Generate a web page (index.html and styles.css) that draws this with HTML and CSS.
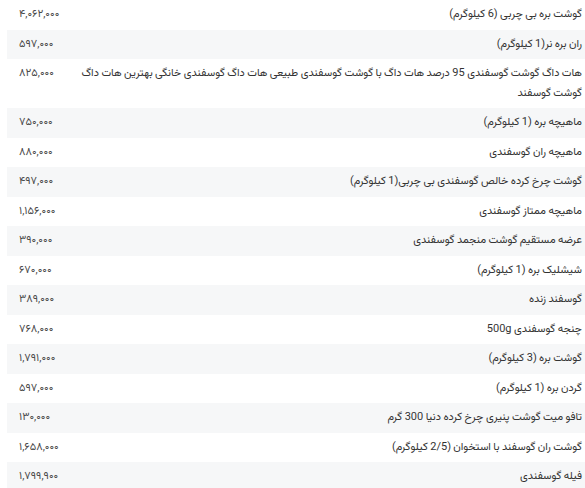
FILE: index.html
```html
<!DOCTYPE html>
<html lang="fa">
<head>
<meta charset="utf-8">
<title>قیمت گوشت گوسفندی</title>
<link rel="stylesheet" href="styles.css">
</head>
<body>
<div class="wrap">
<table class="prices" dir="rtl">
<tbody>
<tr><td class="name">گوشت بره بی چربی (6 کیلوگرم)</td><td class="price">۴,۰۶۲,۰۰۰</td></tr>
<tr><td class="name">ران بره نر(1 کیلوگرم)</td><td class="price">۵۹۷,۰۰۰</td></tr>
<tr><td class="name">هات داگ گوشت گوسفندی 95 درصد هات داگ با گوشت گوسفندی طبیعی هات داگ گوسفندی خانگی بهترین هات داگ گوشت گوسفند</td><td class="price">۸۲۵,۰۰۰</td></tr>
<tr><td class="name">ماهیچه بره (1 کیلوگرم)</td><td class="price">۷۵۰,۰۰۰</td></tr>
<tr><td class="name">ماهیچه ران گوسفندی</td><td class="price">۸۸۰,۰۰۰</td></tr>
<tr><td class="name">گوشت چرخ کرده خالص گوسفندی بی چربی(1 کیلوگرم)</td><td class="price">۴۹۷,۰۰۰</td></tr>
<tr><td class="name">ماهیچه ممتاز گوسفندی</td><td class="price">۱,۱۵۶,۰۰۰</td></tr>
<tr><td class="name">عرضه مستقیم گوشت منجمد گوسفندی</td><td class="price">۳۹۰,۰۰۰</td></tr>
<tr><td class="name">شیشلیک بره (1 کیلوگرم)</td><td class="price">۶۷۰,۰۰۰</td></tr>
<tr><td class="name">گوسفند زنده</td><td class="price">۳۸۹,۰۰۰</td></tr>
<tr><td class="name">چنجه گوسفندی 500g</td><td class="price">۷۶۸,۰۰۰</td></tr>
<tr><td class="name">گوشت بره (3 کیلوگرم)</td><td class="price">۱,۷۹۱,۰۰۰</td></tr>
<tr><td class="name">گردن بره (1 کیلوگرم)</td><td class="price">۵۹۷,۰۰۰</td></tr>
<tr><td class="name">تافو میت گوشت پنیری چرخ کرده دنیا 300 گرم</td><td class="price">۱۳۰,۰۰۰</td></tr>
<tr><td class="name">گوشت ران گوسفند با استخوان (2/5 کیلوگرم)</td><td class="price">۱,۶۵۸,۰۰۰</td></tr>
<tr><td class="name">فیله گوسفندی</td><td class="price">۱,۷۹۹,۹۰۰</td></tr>
</tbody>
</table>
</div>
</body>
</html>
```
FILE: styles.css
```css
html, body {
  margin: 0;
  padding: 0;
  background: #ffffff;
  overflow: hidden;
}
.wrap {
  width: 587px;
  margin-left: 7px;
}
.prices {
  width: 100%;
  border-collapse: collapse;
  font-family: "Vazirmatn", "Noto Sans Arabic", "DejaVu Sans", sans-serif;
  font-size: 11px;
  line-height: 19.5px;
  word-spacing: -0.5px;
  color: #333;
}
.prices td {
  padding: 5px 12px;
  vertical-align: top;
}
.prices tr:nth-child(even) td {
  background: #f6f7f8;
}
.prices .name {
  text-align: right;
  padding-left: 4px;
}
.prices .price {
  width: 46px;
  padding-left: 12px;
  padding-right: 0;
  text-align: left;
  color: #4a4a4a;
  font-size: 11px;
  word-spacing: 0;
  white-space: nowrap;
}
```
